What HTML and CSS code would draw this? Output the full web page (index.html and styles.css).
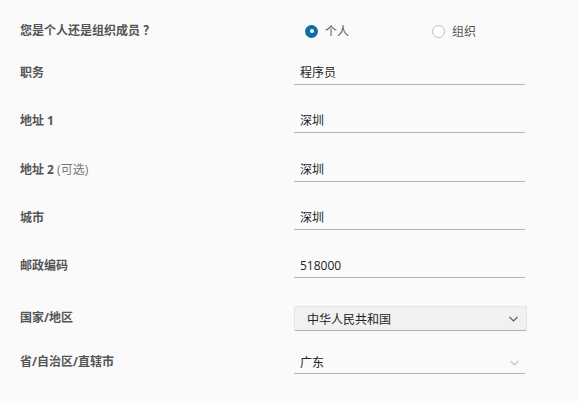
FILE: index.html
```html
<!DOCTYPE html>
<html lang="zh-CN">
<head>
<meta charset="utf-8">
<title>表单</title>
<link rel="stylesheet" href="styles.css">
</head>
<body>
<div class="form">
  <div class="row row-radio">
    <div class="label">您是个人还是组织成员 ？</div>
    <div class="control radios">
      <label class="radio checked"><span class="dot"></span><span class="rtext">个人</span></label>
      <label class="radio"><span class="dot"></span><span class="rtext">组织</span></label>
    </div>
  </div>
  <div class="row"><div class="label">职务</div><div class="control input">程序员</div></div>
  <div class="row row-wide"><div class="label">地址 1</div><div class="control input">深圳</div></div>
  <div class="row"><div class="label">地址 2 <span class="opt">(可选)</span></div><div class="control input">深圳</div></div>
  <div class="row"><div class="label">城市</div><div class="control input">深圳</div></div>
  <div class="row row-before-select"><div class="label">邮政编码</div><div class="control input">518000</div></div>
  <div class="row row-select"><div class="label">国家/地区</div>
    <div class="control select filled"><span>中华人民共和国</span>
      <svg class="chev" width="9" height="6" viewBox="0 0 9 6"><polyline points="0.5,0.8 4.5,4.8 8.5,0.8" fill="none" stroke="#555" stroke-width="1.2"/></svg>
    </div>
  </div>
  <div class="row row-select2"><div class="label">省/自治区/直辖市</div>
    <div class="control select line"><span>广东</span>
      <svg class="chev" width="9" height="6" viewBox="0 0 9 6"><polyline points="0.5,0.8 4.5,4.8 8.5,0.8" fill="none" stroke="#c4c4c4" stroke-width="1.2"/></svg>
    </div>
  </div>
</div>
</body>
</html>
```

FILE: styles.css
```css
html, body {
  margin: 0;
  padding: 0;
  background: #fafafa;
}
body {
  font-family: "Open Sans", "Noto Sans CJK SC", sans-serif;
  font-size: 12px;
}
.form {
  display: flex;
  flex-direction: column;
  padding: 17px 0 0 20px;
}
.row {
  display: flex;
  align-items: center;
  height: 24px;
  margin-bottom: 24px;
}
.row-radio {
  margin-bottom: 20px;
}
.row-radio .label {
  margin-top: 2px;
}
.row-wide {
  margin-bottom: 25px;
}
.row-before-select {
  margin-bottom: 28px;
}
.row-select {
  height: 25px;
  margin-bottom: 19px;
}
.row-select .label {
  margin-top: -4px;
}
.label {
  width: 274px;
  flex: none;
  font-size: 12px;
  font-weight: bold;
  color: #555;
  margin-top: -2px;
}
.opt {
  font-weight: normal;
  color: #777;
}
.control {
  width: 231px;
  height: 24px;
  box-sizing: border-box;
  flex: none;
}
.input {
  border-bottom: 1px solid #b3b3b3;
  padding-left: 6px;
  line-height: 23px;
  color: #222;
}
.radios {
  display: flex;
  align-items: center;
  padding-left: 11px;
  margin-top: 4px;
}
.radio {
  display: flex;
  align-items: center;
  width: 127px;
  flex: none;
  color: #555;
}
.dot {
  width: 13px;
  height: 13px;
  box-sizing: border-box;
  border-radius: 50%;
  border: 1px solid #bdbdbd;
  background: #fff;
  margin-right: 7px;
  position: relative;
}
.checked .dot {
  border: none;
  background: #0f6fa3;
}
.checked .dot::after {
  content: "";
  position: absolute;
  left: 4.5px;
  top: 4.5px;
  width: 4px;
  height: 4px;
  border-radius: 50%;
  background: #fff;
}
.select {
  display: flex;
  align-items: center;
  justify-content: space-between;
  color: #222;
}
.select.filled {
  height: 25px;
  width: 233px;
  background: #f1f1f1;
  border: 1px solid #e4e4e4;
  border-bottom: 1px solid #b3b3b3;
  border-radius: 2px;
  padding: 0 8px 0 12px;
}
.select.line {
  border-bottom: 1px solid #b3b3b3;
  padding: 0 6px 0 6px;
}
.chev {
  display: block;
}
.select.line .chev {
  margin-top: 2px;
}
```
